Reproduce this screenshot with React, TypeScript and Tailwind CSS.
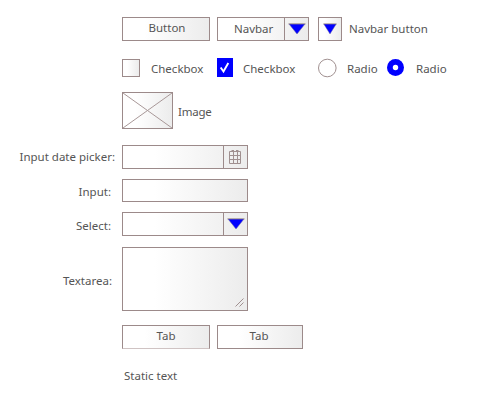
import type { ReactNode } from "react";

const surface = "box-border shrink-0 border border-[#9c8a8a] bg-linear-to-r from-white from-25% to-[#ececec]";

function Text({ children, className = "" }: { children: ReactNode; className?: string }) {
  return <span className={`shrink-0 whitespace-nowrap leading-4 ${className}`}>{children}</span>;
}

function Arrow({ className }: { className: string }) {
  return (
    <svg viewBox="0 0 18 12" preserveAspectRatio="none" className={className}>
      <path d="M1 1H17L9 11Z" fill="#0000ff" />
      <path d="M0.5 0.9H17.5" stroke="#8f8080" strokeWidth="1" />
      <path d="M1 1L9 11L17 1" fill="none" stroke="#77709c" strokeWidth="0.5" />
    </svg>
  );
}

function Calendar() {
  return (
    <svg viewBox="0 0 14 16" className="mr-px mb-px h-4 w-3.5" fill="none" stroke="#a09090">
      <path d="M1.5 2.5H12.5V14.5H1.5ZM1.5 6.5H12.5M1.5 10.5H12.5M5.5 2.5V14.5M9.5 2.5V14.5M3.5 1.5H6M8 1.5H10.5" />
    </svg>
  );
}

export default function App() {
  return (
    <main className="flex h-[400px] w-[480px] flex-col overflow-hidden bg-white pt-[17px] font-['Noto_Sans',sans-serif] text-[11.5px] text-[#555]">
      <div className="flex h-6 pl-[122px]">
        <div className={`${surface} flex w-[88px] justify-center pt-[2px] pl-0.5`}><Text>Button</Text></div>
        <div className={`${surface} ml-[7px] flex w-[92px]`}>
          <div className="w-[67px] border-r border-[#9c8a8a] pt-[2px] pl-4"><Text>Navbar</Text></div>
          <div className="flex flex-1 items-center justify-center"><Arrow className="h-3 w-[18px]" /></div>
        </div>
        <div className={`${surface} ml-[9px] flex w-6 items-center justify-center`}><Arrow className="h-3 w-3.5" /></div>
        <Text className="ml-[7px] pt-1">Navbar button</Text>
      </div>

      <div className="mt-[17px] flex h-5 pl-[122px]">
        <div className={`${surface} mt-px h-[18px] w-[18px]`} />
        <Text className="mt-[3px] ml-[11px] w-[66px]">Checkbox</Text>
        <svg viewBox="0 0 16 19" className="h-[19px] w-4">
          <path d="M0 0H16V19H0Z" fill="#0000ff" />
          <path d="M3.7 9.5L6.5 13.5L11.3 5" fill="none" stroke="white" strokeWidth="1.9" />
        </svg>
        <Text className="mt-[3px] ml-2.5 w-[75px]">Checkbox</Text>
        <svg viewBox="0 0 20 20" className="h-5 w-5">
          <circle cx="9.3" cy="10" r="8.8" fill="white" stroke="#a09090" />
        </svg>
        <Text className="mt-[3px] ml-[9px] w-[39px]">Radio</Text>
        <svg viewBox="0 0 18 19" className="h-[19px] w-[18px]">
          <circle cx="9.5" cy="9.5" r="8.5" fill="#0000ff" />
          <circle cx="9.5" cy="9.5" r="2.7" fill="white" />
        </svg>
        <Text className="mt-[3px] ml-3">Radio</Text>
      </div>

      <div className="mt-[14px] flex h-[37px] pl-[122px]">
        <div className={`${surface} w-[51px]`}>
          <svg viewBox="0 0 49 35" className="h-full w-full" fill="none" stroke="#a89898">
            <path d="M0 0L49 35M49 0L0 35" />
          </svg>
        </div>
        <Text className="mt-3 ml-[5px] tracking-[-0.2px]">Image</Text>
      </div>

      <div className="mt-4 flex h-6">
        <Text className="w-[115px] pt-1 text-right">Input date picker:</Text>
        <div className={`${surface} ml-[7px] flex w-[126px]`}>
          <div className="w-[101px] border-r border-[#9c8a8a]" />
          <div className="flex flex-1 items-center justify-center"><Calendar /></div>
        </div>
      </div>

      <div className="mt-[10px] flex h-[23px]">
        <Text className="w-[111px] pt-[5px] text-right">Input:</Text>
        <div className={`${surface} ml-[11px] w-[126px]`} />
      </div>

      <div className="mt-[10px] flex h-6">
        <Text className="w-[111px] pt-[6px] text-right">Select:</Text>
        <div className={`${surface} ml-[11px] flex w-[126px]`}>
          <div className="w-[101px] border-r border-[#9c8a8a]" />
          <div className="flex flex-1 items-center justify-center"><Arrow className="h-3 w-[18px]" /></div>
        </div>
      </div>

      <div className="mt-[11px] flex h-16">
        <Text className="w-[112px] pt-[26px] text-right">Textarea:</Text>
        <div className={`${surface} ml-[10px] flex w-[126px] items-end justify-end pr-[3px] pb-[3px]`}>
          <svg viewBox="0 0 9 9" className="h-[9px] w-[9px]" fill="none" stroke="#a09090">
            <path d="M0.5 8.5L8.5 0.5M4.5 8.5L8.5 4.5" />
          </svg>
        </div>
      </div>

      <div className="mt-3.5 flex h-6 pl-[122px]">
        <div className={`${surface} flex w-[88px] justify-center border-b-[#cfc3c3] pt-[2px]`}><Text>Tab</Text></div>
        <div className={`${surface} ml-[7px] flex w-[86px] justify-center pt-[2px] pr-0.5`}><Text>Tab</Text></div>
      </div>

      <Text className="mt-[19px] ml-[124px]">Static text</Text>
    </main>
  );
}
